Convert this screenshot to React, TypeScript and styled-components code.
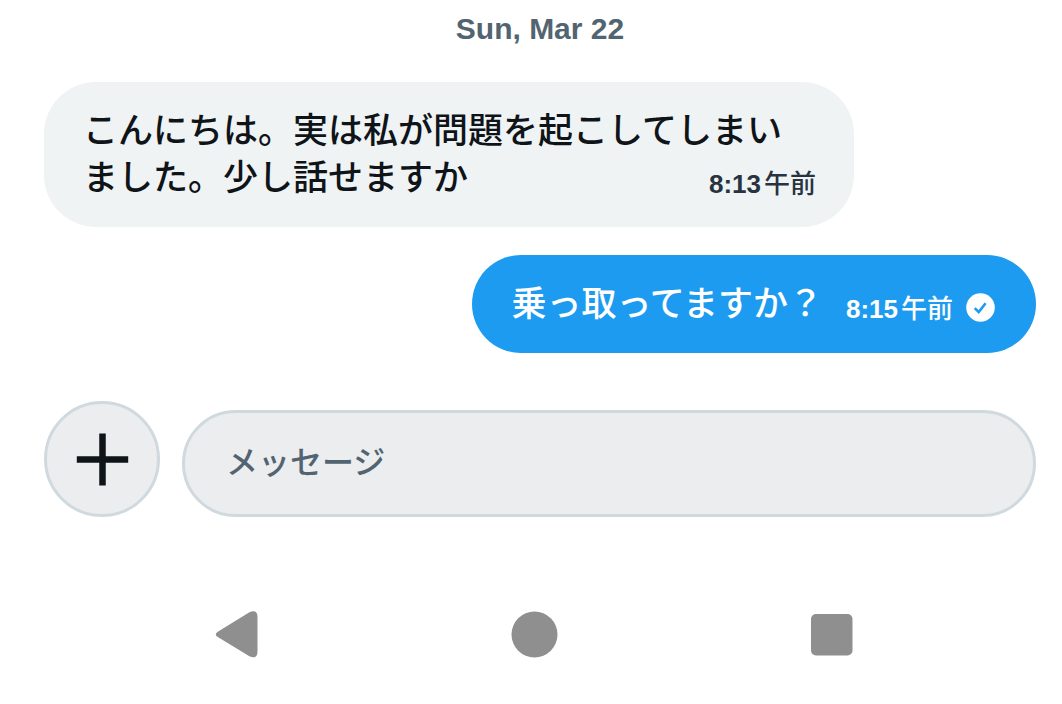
import React from "react";
import styled, { createGlobalStyle } from "styled-components";

const GlobalStyle = createGlobalStyle`
  *, *::before, *::after { box-sizing: border-box; }
  body {
    margin: 0;
    background: #ffffff;
    color: #0f1419;
    font-family: "Liberation Sans", "Noto Sans CJK JP", sans-serif;
    font-weight: 500;
  }
`;

const Screen = styled.div`
  display: flex;
  flex-direction: column;
`;

const Conversation = styled.main`
  display: flex;
  flex-direction: column;
  gap: 28px;
  padding: 9px 26px 48px 44px;
`;

const DateLabel = styled.h2`
  margin: 0 0 5px;
  color: #536471;
  font-size: 30px;
  line-height: 40px;
  font-weight: 700;
  text-align: center;
`;

const Bubble = styled.article<{ $sent?: boolean }>`
  align-self: ${(p) => (p.$sent ? "flex-end" : "flex-start")};
  max-width: 810px;
  padding: 22px ${(p) => (p.$sent ? 41 : 38)}px 29px 39px;
  border-radius: 52px;
  background: ${(p) => (p.$sent ? "#1d9bf0" : "#eff3f4")};
  color: ${(p) => (p.$sent ? "#ffffff" : "#0f1419")};
  font-family: "Noto Sans CJK JP", sans-serif;
  font-size: 35px;
  line-height: 47px;
`;

const Meta = styled.span<{ $sent?: boolean }>`
  float: right;
  display: flex;
  align-items: center;
  gap: 13px;
  height: 47px;
  margin-left: 23px;
  padding-top: ${(p) => (p.$sent ? 14 : 16)}px;
  color: ${(p) => (p.$sent ? "#ffffff" : "#273340")};
  font-size: 26px;
  line-height: 32px;
`;

const Time = styled.time`
  display: flex;
  align-items: baseline;
  gap: 3px;
`;

const Clock = styled.b`
  font-family: "Liberation Sans", sans-serif;
  font-weight: 700;
`;

const Composer = styled.form`
  display: flex;
  align-items: flex-end;
  gap: 22px;
  padding: 0 26px 0 44px;
`;

const AddButton = styled.button`
  display: grid;
  place-items: center;
  flex: none;
  width: 116px;
  height: 116px;
  padding: 0;
  border: 3px solid #cfd9de;
  border-radius: 50%;
  background: #ebedef;
  color: #0f1419;
`;

const MessageInput = styled.input`
  flex: 1;
  min-width: 0;
  height: 107px;
  padding: 0 41px;
  border: 3px solid #cfd9de;
  border-radius: 54px;
  background: #ebedef;
  color: #0f1419;
  font: inherit;
  font-size: 32px;
  &::placeholder {
    color: #536471;
    opacity: 1;
  }
`;

const SystemNav = styled.nav`
  display: grid;
  grid-template-columns: repeat(3, 1fr);
  justify-items: center;
  padding: 93px 83px 45px 88px;
`;

const NavButton = styled.button`
  display: block;
  width: 48px;
  height: 48px;
  padding: 0;
  border: 0;
  background: none;
  color: #8f8f8f;
`;

const SentIcon = () => (
  <svg width="29" height="29" viewBox="0 0 29 29" role="img" aria-label="送信済み">
    <circle cx="14.5" cy="14.5" r="14.3" fill="#fff" />
    <path d="M8.7 15.1 12.7 19 19.6 10.2" fill="none" stroke="#1d9bf0" strokeWidth="2.6" />
  </svg>
);

export default function App() {
  return (
    <Screen>
      <GlobalStyle />
      <Conversation>
        <DateLabel>Sun, Mar 22</DateLabel>
        <Bubble>
          こんにちは。実は私が問題を起こしてしまいました。少し話せますか
          <Meta>
            <Time dateTime="08:13">
              <Clock>8:13</Clock> <span>午前</span>
            </Time>
          </Meta>
        </Bubble>
        <Bubble $sent>
          乗っ取ってますか？
          <Meta $sent>
            <Time dateTime="08:15">
              <Clock>8:15</Clock> <span>午前</span>
            </Time>
            <SentIcon />
          </Meta>
        </Bubble>
      </Conversation>
      <Composer>
        <AddButton type="button" aria-label="追加">
          <svg width="54" height="54" viewBox="0 0 54 54" aria-hidden="true">
            <path d="M27.5 1.5V53.5M1.8 27.5H53.2" stroke="currentColor" strokeWidth="6.5" />
          </svg>
        </AddButton>
        <MessageInput type="text" aria-label="メッセージ" placeholder="メッセージ" />
      </Composer>
      <SystemNav>
        <NavButton type="button" aria-label="戻る">
          <svg width="48" height="48" viewBox="0 0 48 48" aria-hidden="true">
            <path
              d="M5.2 21.5 36.4 2.2Q44.5-1 44.5 7V41Q44.5 50 36.4 46.2L5.2 27.3Q.3 24.4 5.2 21.5Z"
              fill="currentColor"
            />
          </svg>
        </NavButton>
        <NavButton type="button" aria-label="ホーム">
          <svg width="48" height="48" viewBox="0 0 48 48" aria-hidden="true">
            <circle cx="24.5" cy="24.5" r="23" fill="currentColor" />
          </svg>
        </NavButton>
        <NavButton type="button" aria-label="履歴">
          <svg width="48" height="48" viewBox="0 0 48 48" aria-hidden="true">
            <rect x="4" y="4" width="41.5" height="41.5" rx="5" fill="currentColor" />
          </svg>
        </NavButton>
      </SystemNav>
    </Screen>
  );
}
